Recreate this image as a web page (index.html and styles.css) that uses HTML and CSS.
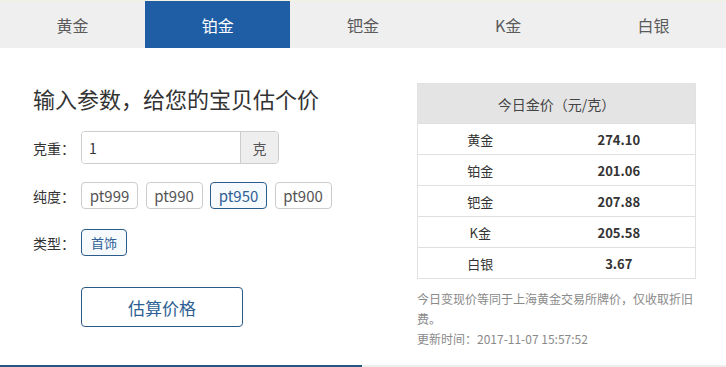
FILE: index.html
```html
<!DOCTYPE html>
<html lang="zh-CN">
<head>
<meta charset="utf-8">
<title>估价</title>
<link rel="stylesheet" href="styles.css">
</head>
<body>
<nav class="tabs">
  <div class="tab">黄金</div>
  <div class="tab active">铂金</div>
  <div class="tab">钯金</div>
  <div class="tab">K金</div>
  <div class="tab">白银</div>
</nav>
<main class="main">
  <section class="form">
    <h1 class="title">输入参数，给您的宝贝估个价</h1>
    <div class="row row-weight">
      <span class="label">克重：</span>
      <div class="input-group">
        <input class="input" type="text" value="1">
        <span class="addon">克</span>
      </div>
    </div>
    <div class="row row-purity">
      <span class="label">纯度：</span>
      <div class="opts">
        <span class="opt">pt999</span>
        <span class="opt">pt990</span>
        <span class="opt selected">pt950</span>
        <span class="opt">pt900</span>
      </div>
    </div>
    <div class="row row-type">
      <span class="label">类型：</span>
      <span class="opt small selected">首饰</span>
    </div>
    <div class="row row-submit">
      <span class="label"></span>
      <button class="submit" type="button">估算价格</button>
    </div>
  </section>
  <aside class="prices">
    <table class="price-table">
      <thead>
        <tr><th colspan="2">今日金价（元/克）</th></tr>
      </thead>
      <tbody>
        <tr><td class="name">黄金</td><td class="val">274.10</td></tr>
        <tr><td class="name">铂金</td><td class="val">201.06</td></tr>
        <tr><td class="name">钯金</td><td class="val">207.88</td></tr>
        <tr><td class="name">K金</td><td class="val">205.58</td></tr>
        <tr><td class="name">白银</td><td class="val">3.67</td></tr>
      </tbody>
    </table>
    <p class="note">今日变现价等同于上海黄金交易所牌价，仅收取折旧费。<br>更新时间：2017-11-07 15:57:52</p>
  </aside>
</main>
<div class="bottom">
  <div class="bottom-active"></div>
  <div class="bottom-rest"></div>
</div>
</body>
</html>
```
FILE: styles.css
```css
* { box-sizing: border-box; }
html, body { margin: 0; padding: 0; }
body {
  width: 726px;
  height: 367px;
  overflow: hidden;
  background: #fff;
  font-family: "Noto Sans CJK SC", "Open Sans", sans-serif;
  color: #333;
}
.tabs {
  display: flex;
  height: 48px;
  background: #efefef;
  border-top: 1px solid #f3f1e2;
}
.tab {
  flex: 1;
  display: flex;
  align-items: center;
  justify-content: center;
  font-size: 16px;
  color: #5a5a5a;
}
.tab.active {
  background: #1f5da5;
  color: #fff;
}
.main {
  display: flex;
  height: 317px;
  padding: 35px 0 0 33px;
}
.form { width: 384px; }
.title {
  margin: 0 0 18px;
  font-size: 22px;
  font-weight: normal;
  line-height: 30px;
  color: #333;
}
.row {
  display: flex;
  align-items: center;
}
.label {
  width: 48px;
  font-size: 14px;
  color: #333;
}
.row-weight { height: 33px; }
.row-purity { margin-top: 18px; height: 27px; }
.row-type { margin-top: 20px; height: 27px; }
.row-submit { margin-top: 31px; }
.input-group {
  display: flex;
  width: 198px;
  height: 33px;
  border: 1px solid #ccc;
  border-radius: 4px;
  overflow: hidden;
}
.input {
  flex: 1;
  min-width: 0;
  border: 0;
  padding: 0 7px;
  font-family: inherit;
  font-size: 14px;
  color: #333;
  outline: none;
  background: #fff;
}
.addon {
  width: 38px;
  display: flex;
  align-items: center;
  justify-content: center;
  background: #eee;
  border-left: 1px solid #ccc;
  font-size: 14px;
  color: #555;
}
.opts { display: flex; gap: 7.5px; }
.opt {
  display: inline-flex;
  align-items: center;
  justify-content: center;
  height: 27px;
  width: 57px;
  border: 1px solid #ccc;
  border-radius: 4px;
  font-size: 15px;
  color: #555;
  background: #fff;
}
.opt.selected {
  border-color: #2c5c8c;
  color: #2f6096;
  background: #f6fafd;
}
.opt.small {
  width: 46px;
  font-size: 13px;
}
.submit {
  width: 162px;
  height: 40px;
  border: 1px solid #2c5a88;
  border-radius: 4px;
  background: #fff;
  font-family: inherit;
  font-size: 17px;
  color: #2d5f94;
  padding: 0;
}
.prices { width: 280px; }
.price-table {
  width: 279px;
  border-collapse: collapse;
  border: 1px solid #e2e2e2;
  font-size: 13px;
}
.price-table th {
  height: 40px;
  background: #e4e4e4;
  font-weight: normal;
  font-size: 14px;
  color: #444;
}
.price-table td {
  height: 31px;
  border-top: 1px solid #e0e0e0;
  text-align: center;
  padding: 0;
}
.price-table .name { width: 45%; color: #333; }
.price-table .val { font-weight: bold; color: #333; }
.note {
  margin: 10px 0 0;
  font-size: 12px;
  line-height: 20px;
  color: #8a8a8a;
}
.bottom {
  display: flex;
  height: 2px;
}
.bottom-active { width: 362px; background: #235781; }
.bottom-rest { flex: 1; background: #eee; }
```
